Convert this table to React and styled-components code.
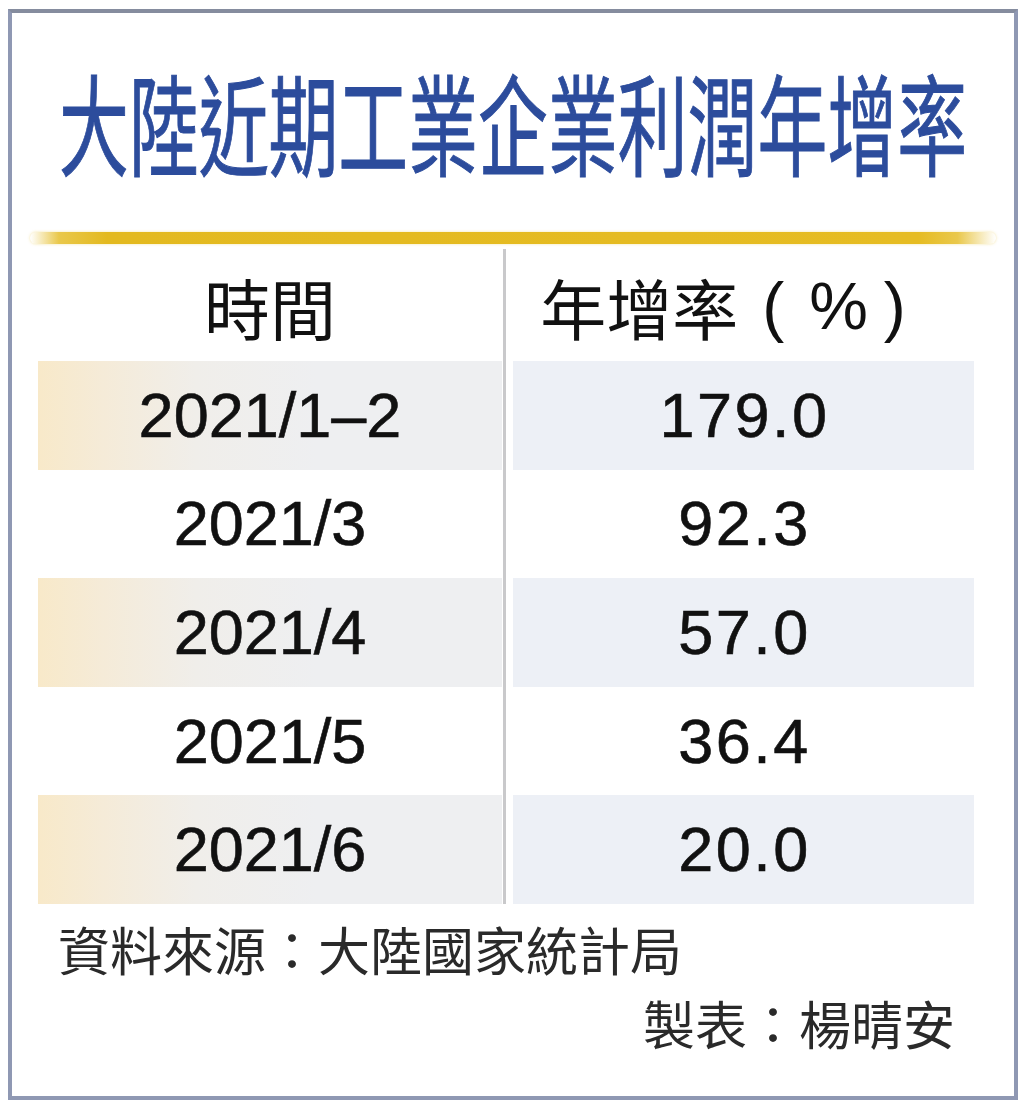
import React from "react";
import styled, { createGlobalStyle } from "styled-components";

const GlobalStyle = createGlobalStyle`
  html, body {
    margin: 0;
    padding: 0;
    background: #ffffff;
  }
`;

const rows = [
  { period: "2021/1–2", rate: "179.0" },
  { period: "2021/3", rate: "92.3" },
  { period: "2021/4", rate: "57.0" },
  { period: "2021/5", rate: "36.4" },
  { period: "2021/6", rate: "20.0" },
];

const App = () => {
  return (
    <>
      <GlobalStyle />
      <Frame>
        <TitleBar>
          <Title>大陸近期工業企業利潤年增率</Title>
        </TitleBar>
        <GoldRule />
        <Table>
          <Divider />
          <HeadCell col={1}>時間</HeadCell>
          <HeadCell col={3} shift={41}>
            年增率
            <Paren gap={24}>(</Paren>
            <Paren gap={25}>%</Paren>
            <Paren gap={16}>)</Paren>
          </HeadCell>
          {rows.map((r, i) => (
            <React.Fragment key={r.period}>
              <PeriodCell shaded={i % 2 === 0}>{r.period}</PeriodCell>
              <RateCell shaded={i % 2 === 0}>{r.rate}</RateCell>
            </React.Fragment>
          ))}
        </Table>
        <Footer>
          <Source>資料來源：大陸國家統計局</Source>
          <Credit>製表：楊晴安</Credit>
        </Footer>
      </Frame>
    </>
  );
};

export default App;

const Frame = styled.div`
  box-sizing: border-box;
  width: 1010px;
  height: 1091px;
  margin: 9px 0 0 8px;
  border: 4px solid #8f98b3;
  border-top-color: #858c9e;
  background: #ffffff;
  display: flex;
  flex-direction: column;
`;

const TitleBar = styled.div`
  display: flex;
  justify-content: center;
  padding-top: 52px;
  height: 110px;
`;

const Title = styled.h1`
  margin: 0;
  display: inline-block;
  font-family: "Noto Sans CJK TC", "Noto Sans CJK SC", sans-serif;
  font-weight: 400;
  font-size: 110px;
  line-height: 1;
  color: #2c4c9c;
  white-space: nowrap;
  transform: scaleX(0.635);
  transform-origin: center top;
  -webkit-text-stroke: 1px #2c4c9c;
`;

const GoldRule = styled.div`
  margin: 57px 18px 0 18px;
  height: 12px;
  border-radius: 6px;
  background: linear-gradient(
    to right,
    rgba(228, 186, 30, 0) 0%,
    rgba(228, 186, 30, 0.8) 3%,
    #e3b91f 8%,
    #e6bc22 92%,
    rgba(228, 186, 30, 0.8) 96%,
    rgba(228, 186, 30, 0) 100%
  );
  box-shadow: 0 0 3px rgba(228, 190, 40, 0.4);
`;

const Table = styled.div`
  display: grid;
  grid-template-columns: 464px 11px 461px;
  grid-template-rows: 112px repeat(5, 108.6px);
  margin: 5px 0 0 26px;
`;

const Divider = styled.div`
  grid-column: 2;
  grid-row: 1 / -1;
  justify-self: start;
  width: 3px;
  margin-left: 1px;
  background: #c9c9cb;
`;

const HeadCell = styled.div`
  grid-column: ${(p) => p.col};
  grid-row: 1;
  display: flex;
  align-items: center;
  justify-content: center;
  padding: 2px ${(p) => p.shift || 0}px 0 0;
  font-family: "Noto Sans CJK TC", "Noto Sans CJK SC", sans-serif;
  font-size: 66px;
  line-height: 1;
  color: #111111;
  white-space: nowrap;
`;

const Paren = styled.span`
  margin-left: ${(p) => p.gap}px;
  font-family: "Liberation Sans", Arial, sans-serif;
  font-size: 66px;
  line-height: 1;
`;

const Cell = styled.div`
  display: flex;
  align-items: center;
  justify-content: center;
  font-family: "Liberation Sans", Arial, sans-serif;
  font-size: 63px;
  line-height: 1;
  color: #111111;
  -webkit-text-stroke: 0.6px #111111;
`;

const PeriodCell = styled(Cell)`
  grid-column: 1;
  background: ${(p) =>
    p.shaded
      ? "linear-gradient(to right, #f8e9c9 0%, #f5ebd8 14%, #f0eeea 34%, #eeeff1 60%, #eeeff1 100%)"
      : "transparent"};
`;

const RateCell = styled(Cell)`
  grid-column: 3;
  letter-spacing: 2.5px;
  padding-left: 2px;
  background: ${(p) => (p.shaded ? "#edf0f6" : "transparent")};
`;

const Footer = styled.div`
  display: flex;
  flex-direction: column;
  padding: 19px 59px 0 46px;
  font-family: "Noto Sans CJK TC", "Noto Sans CJK SC", sans-serif;
  font-size: 52px;
  line-height: 1;
  color: #2a2a2a;
`;

const Source = styled.div`
  align-self: flex-start;
`;

const Credit = styled.div`
  align-self: flex-end;
  margin-top: 22px;
`;
